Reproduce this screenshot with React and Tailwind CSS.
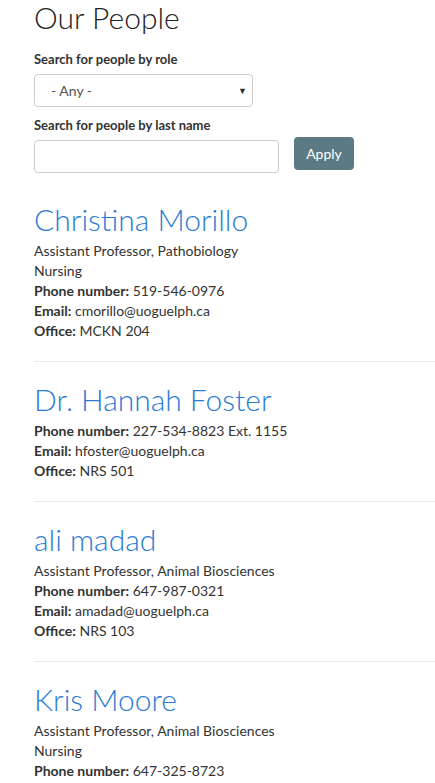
import React from "react";

const people = [
  {
    name: "Christina Morillo",
    lines: ["Assistant Professor, Pathobiology", "Nursing"],
    phone: "519-546-0976",
    email: "cmorillo@uoguelph.ca",
    office: "MCKN 204",
  },
  {
    name: "Dr. Hannah Foster",
    lines: [],
    phone: "227-534-8823 Ext. 1155",
    email: "hfoster@uoguelph.ca",
    office: "NRS 501",
  },
  {
    name: "ali madad",
    lines: ["Assistant Professor, Animal Biosciences"],
    phone: "647-987-0321",
    email: "amadad@uoguelph.ca",
    office: "NRS 103",
  },
  {
    name: "Kris Moore",
    lines: ["Assistant Professor, Animal Biosciences", "Nursing"],
    phone: "647-325-8723",
  },
];

const Person = ({ p }) => (
  <div className="pt-[19px] pb-[20px] border-b border-[#eaeaea]">
    <h2 className="text-[30px] leading-[36px] font-light text-[#2a7bd3] mb-[4px]">
      {p.name}
    </h2>
    <div className="text-[14px] leading-[20px] text-[#333]">
      {p.lines.map((l, i) => (
        <div key={i}>{l}</div>
      ))}
      {p.phone && (
        <div>
          <span className="font-bold">Phone number:</span> {p.phone}
        </div>
      )}
      {p.email && (
        <div>
          <span className="font-bold">Email:</span> {p.email}
        </div>
      )}
      {p.office && (
        <div>
          <span className="font-bold">Office:</span> {p.office}
        </div>
      )}
    </div>
  </div>
);

export default function App() {
  return (
    <div
      className="w-[435px] h-[783px] overflow-hidden bg-white pl-[34px] text-[#333]"
      style={{ fontFamily: "Lato, 'Open Sans', sans-serif" }}
    >
      <h1 className="text-[30px] leading-[35px] font-light text-[#222]">
        Our People
      </h1>
      <div className="mt-[14px] text-[13px] leading-[20px] font-bold text-[#333]">
        Search for people by role
      </div>
      <div className="mt-[5px] w-[219px] h-[33px] border border-[#ccc] rounded-[4px] flex items-center justify-between pl-[16px] pr-[5px] text-[14px] text-[#555]">
        <span>- Any -</span>
        <span className="text-[9px] text-[#333]">▼</span>
      </div>
      <div className="mt-[8px] text-[13px] leading-[20px] font-bold text-[#333]">
        Search for people by last name
      </div>
      <div className="mt-[5px] flex items-start">
        <div className="w-[245px] h-[33px] border border-[#ccc] rounded-[4px]" />
        <button className="-mt-[3px] ml-[15px] w-[60px] h-[33px] rounded-[4px] bg-[#5b7a83] text-white text-[14px]">
          Apply
        </button>
      </div>
      <div className="mt-[9px]">
        {people.map((p, i) => (
          <Person key={i} p={p} />
        ))}
      </div>
    </div>
  );
}
